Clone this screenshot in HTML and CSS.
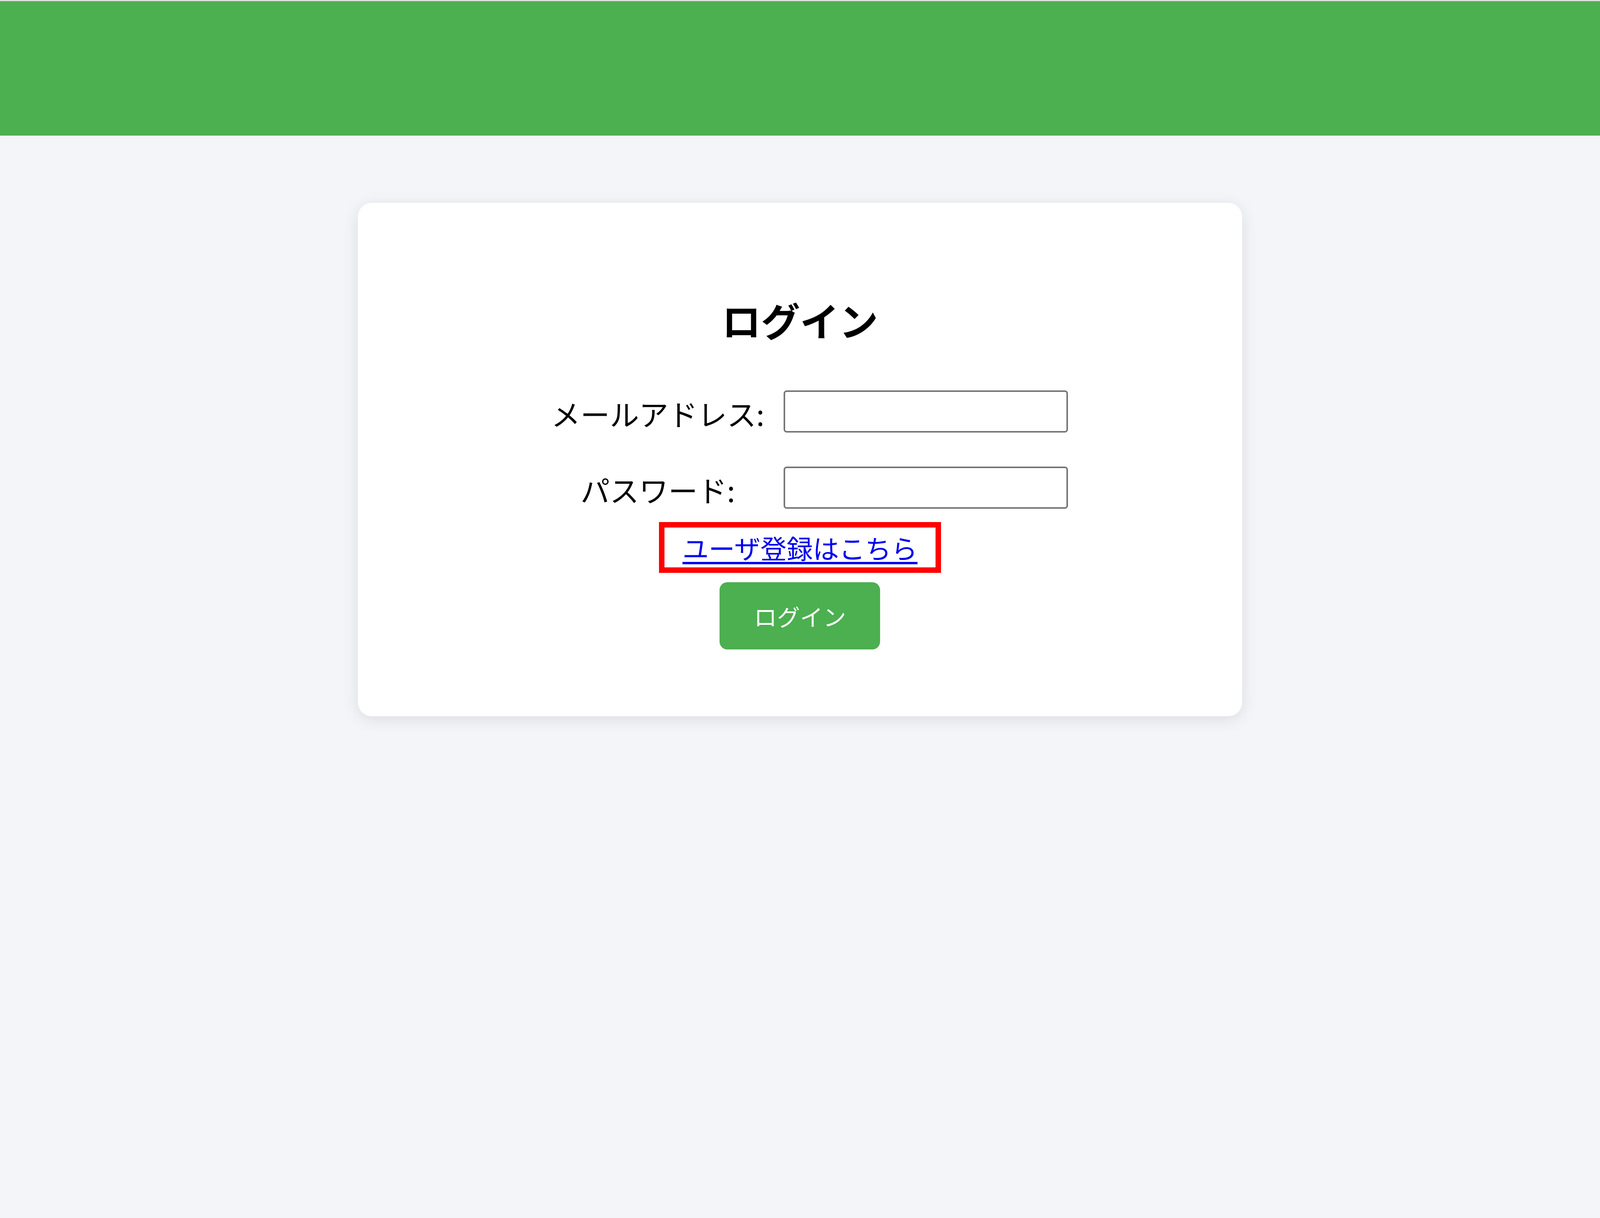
FILE: index.html
```html
<!DOCTYPE html>
<html lang="ja">
<head>
<meta charset="utf-8">
<title>ログイン</title>
<link rel="stylesheet" href="styles.css">
</head>
<body>
<header class="topbar"></header>
<main class="main">
  <section class="card">
    <h2 class="title">ログイン</h2>
    <form class="form">
      <label class="label" for="email">メールアドレス:</label>
      <input class="input" id="email" type="email">
      <label class="label" for="password">パスワード:</label>
      <input class="input" id="password" type="password">
    </form>
    <div class="register"><a class="register-link" href="#">ユーザ登録はこちら</a></div>
    <button class="btn" type="button">ログイン</button>
  </section>
</main>
</body>
</html>
```

FILE: styles.css
```css
html, body {
  margin: 0;
  padding: 0;
}
body {
  background: #f4f5f9;
  font-family: "Noto Sans CJK JP", "Noto Sans", sans-serif;
  color: #000;
  min-height: 3117px;
}
.topbar {
  height: 344px;
  background: #4caf50;
  border-top: 3px solid #e0e0e0;
}
.main {
  padding-top: 172px;
}
.card {
  width: 55.29%;
  height: 1314px;
  box-sizing: border-box;
  margin: 0 auto;
  background: #fff;
  border-radius: 36px;
  box-shadow: 0 8px 42px rgba(0, 0, 0, 0.1);
  padding-top: 239px;
  display: flex;
  flex-direction: column;
  align-items: center;
}
.title {
  margin: 0;
  font-size: 100px;
  line-height: 120px;
  font-weight: 700;
}
.form {
  margin-top: 121px;
  display: grid;
  grid-template-columns: 644px 728px;
  row-gap: 87px;
  align-items: center;
}
.label {
  text-align: center;
  font-size: 75px;
  line-height: 90px;
  padding-top: 10px;
}
.input {
  width: 728px;
  height: 108px;
  box-sizing: border-box;
  border: 4px solid #767676;
  border-radius: 8px;
  background: #fff;
  margin: 0;
  padding: 0 8px;
  font-size: 56px;
}
.register {
  margin-top: 34px;
  border: 14px solid #ff0000;
  padding: 11px 46px;
  font-size: 67px;
  line-height: 80px;
  height: 80px;
}
.register-link {
  color: #0000ee;
  text-decoration: underline;
  text-decoration-thickness: 6px;
  text-underline-offset: 8px;
}
.btn {
  margin-top: 24px;
  width: 411px;
  height: 172px;
  border: none;
  border-radius: 20px;
  background: #4caf50;
  color: #fff;
  font-family: "Noto Sans CJK JP", "Noto Sans", sans-serif;
  font-size: 59px;
  line-height: 71px;
  padding: 0;
}
```
